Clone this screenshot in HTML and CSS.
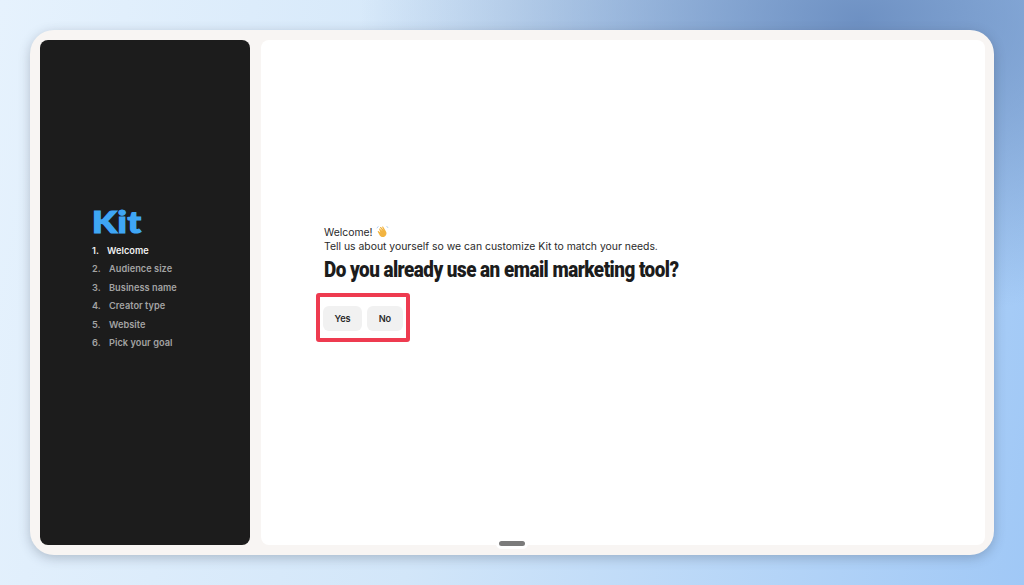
FILE: index.html
```html
<!DOCTYPE html>
<html lang="en">
<head>
  <meta charset="UTF-8" />
  <title>Kit onboarding</title>
  <link rel="stylesheet" href="styles.css">
</head>
<body>
  <div class="frame">
    <aside class="sidebar">
      <div class="logo">Kit</div>
      <ol class="steps">
        <li class="step active"><span class="num">1.</span>Welcome</li>
        <li class="step"><span class="num">2.</span>Audience size</li>
        <li class="step"><span class="num">3.</span>Business name</li>
        <li class="step"><span class="num">4.</span>Creator type</li>
        <li class="step"><span class="num">5.</span>Website</li>
        <li class="step"><span class="num">6.</span>Pick your goal</li>
      </ol>
    </aside>
    <main class="content">
      <p class="intro">Welcome!
        <svg class="wave" viewBox="0 0 24 24" aria-hidden="true">
          <path fill="#f2b441" d="M6 8.500c-.8-1-.2-2.200 1-1.800l5 4.500-4.500-6c-.8-1.200.8-2.300 1.700-1.300l5 5.500-2.800-5.200c-.6-1.300 1.100-2.100 1.900-1l3.800 6.300c1 1.800 1.900 3 2.200 5 .5 3.500-1.500 6.500-4.800 7.500-3 .9-5.200-.2-7.200-2.300L3.500 13c-.9-1.100.4-2.400 1.500-1.500l3 2.500z"/>
          <path fill="none" stroke="#9fc3ea" stroke-width="1.400" stroke-linecap="round" d="M2 5.500 4 3M20 2.500l2 2.500"/>
        </svg>
      </p>
      <p class="intro">Tell us about yourself so we can customize Kit to match your needs.</p>
      <h1 class="question">Do you already use an email marketing tool?</h1>
      <div class="highlight">
        <button class="choice">Yes</button>
        <button class="choice">No</button>
      </div>
    </main>
    <div class="handle"></div>
  </div>
</body>
</html>
```

FILE: styles.css
```css
* {
  box-sizing: border-box;
}
html, body {
  margin: 0;
  height: 100%;
}
body {
  padding: 30px;
  font-family: Inter, "Liberation Sans", sans-serif;
  background-color: #b4d3f5;
  background-image:
    radial-gradient(ellipse 500px 300px at 860px 20px, rgba(106, 141, 192, 0.95), rgba(106, 141, 192, 0)),
    linear-gradient(100deg, #e6f2fd 0%, #d2e6f9 45%, #a0c8f6 100%);
  overflow: hidden;
}
.frame {
  position: relative;
  display: flex;
  gap: 11px;
  height: 525px;
  padding: 10px 9px 10px 10px;
  background-color: #f8f5f3;
  border-radius: 24px;
  box-shadow: 0 3px 12px rgba(50, 60, 80, 0.28);
}
.sidebar {
  width: 210px;
  flex-shrink: 0;
  display: flex;
  flex-direction: column;
  justify-content: center;
  padding: 0 0 23px 52px;
  background-color: #1c1c1c;
  border-radius: 8px;
}
.logo {
  height: 22px;
  margin-bottom: 9px;
  font-family: Lato, sans-serif;
  font-size: 30px;
  font-weight: 900;
  line-height: 22px;
  letter-spacing: 0.5px;
  color: #3fa6f5;
  -webkit-text-stroke: 1.2px #3fa6f5;
  transform: scaleX(1.2);
  transform-origin: left center;
}
.steps {
  margin: 0;
  padding: 0;
  list-style: none;
}
.step {
  display: flex;
  height: 18.4px;
  align-items: center;
  font-size: 9.2px;
  font-weight: 600;
  letter-spacing: 0.05px;
  color: #a3a3a3;
}
.step .num {
  width: 17px;
}
.step.active {
  color: #f0f0f0;
}
.step.active .num {
  width: 15px;
}
.content {
  flex: 1;
  display: flex;
  flex-direction: column;
  justify-content: center;
  align-items: flex-start;
  padding: 0 0 18px 63px;
  background-color: #fff;
  border-radius: 8px;
}
.intro {
  margin: 0;
  font-size: 10.4px;
  line-height: 14px;
  color: #2a2a2a;
}
.wave {
  width: 13px;
  height: 13px;
  vertical-align: -2px;
}
.question {
  margin: 2.500px 0 9px;
  font-family: Roboto, "Liberation Sans", sans-serif;
  font-size: 22px;
  font-weight: 900;
  line-height: 28px;
  letter-spacing: -0.6px;
  white-space: nowrap;
  color: #1c1c1c;
  transform: scaleX(0.857);
  transform-origin: left center;
}
.highlight {
  display: flex;
  gap: 5px;
  margin-left: -8px;
  padding: 9px 3px 7px 3px;
  border: 4px solid #ee3b50;
  border-radius: 3px;
}
.choice {
  height: 25px;
  padding: 0 11.5px;
  font-family: inherit;
  font-size: 9.2px;
  font-weight: 600;
  color: #2a2a2a;
  background-color: #f1f1f1;
  border: none;
  border-radius: 6px;
}
.handle {
  position: absolute;
  left: 469px;
  bottom: 9px;
  width: 26px;
  height: 5px;
  background-color: #7b7b7b;
  border-radius: 3px;
  box-shadow: 0 0 0 3px #fff;
}
```
